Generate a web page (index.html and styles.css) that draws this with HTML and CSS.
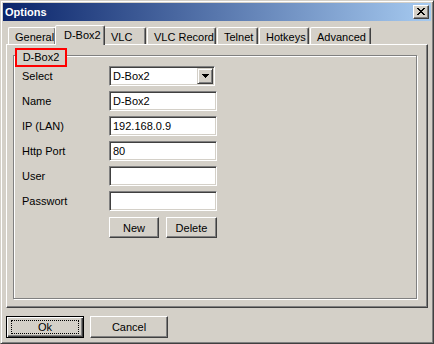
FILE: index.html
```html
<!DOCTYPE html>
<html lang="en">
<head>
    <meta charset="UTF-8">
    <title>Options</title>
    <link rel="stylesheet" href="styles.css">
</head>
<body>

  <div class="window">
    <div class="titlebar">
      <span class="title">Options</span>
      <span class="close-btn">
        <svg width="8" height="7" viewBox="0 0 8 7" shape-rendering="crispEdges">
          <path d="M0 0h2v1h-2z M6 0h2v1h-2z M1 1h2v1h-2z M5 1h2v1h-2z M2 2h4v1h-4z M3 3h2v1h-2z M2 4h4v1h-4z M1 5h2v1h-2z M5 5h2v1h-2z M0 6h2v1h-2z M6 6h2v1h-2z" fill="#000"/>
        </svg>
      </span>
    </div>

    <div class="content">
      <div class="tabs">
        <div class="tab tab-general">General</div>
        <div class="tab tab-dbox active">D-Box2</div>
        <div class="tab tab-vlc">VLC</div>
        <div class="tab tab-record">VLC Record</div>
        <div class="tab tab-telnet">Telnet</div>
        <div class="tab tab-hotkeys">Hotkeys</div>
        <div class="tab tab-advanced">Advanced</div>
      </div>

      <div class="panel">
        <div class="group">
          <span class="legend">D-Box2</span>
          <div class="form">
            <label>Select</label>
            <div class="combo">
              <span class="combo-text">D-Box2</span>
              <span class="combo-btn">
                <svg width="7" height="4" viewBox="0 0 7 4" shape-rendering="crispEdges">
                  <path d="M0 0h7v1h-7z M1 1h5v1h-5z M2 2h3v1h-3z M3 3h1v1h-1z" fill="#000"/>
                </svg>
              </span>
            </div>

            <label>Name</label>
            <input type="text" class="field" value="D-Box2">

            <label>IP (LAN)</label>
            <input type="text" class="field" value="192.168.0.9">

            <label>Http Port</label>
            <input type="text" class="field" value="80">

            <label>User</label>
            <input type="text" class="field" value="">

            <label>Passwort</label>
            <input type="text" class="field" value="">

            <span></span>
            <div class="actions">
              <button class="btn btn-new">New</button>
              <button class="btn btn-delete">Delete</button>
            </div>
          </div>
        </div>
      </div>

      <div class="footer">
        <button class="btn btn-wide btn-default"><span class="focus">Ok</span></button>
        <button class="btn btn-wide">Cancel</button>
      </div>
    </div>
  </div>

</body>
</html>
```

FILE: styles.css
```css
body {
    margin: 0;
    padding: 0;
    background-color: #d4d0c8;
    font-family: "Liberation Sans", Arial, sans-serif;
    font-size: 11px;
    color: #000000;
}

/* classic window frame */
.window {
    box-sizing: border-box;
    width: 434px;
    height: 344px;
    background-color: #d4d0c8;
    border: 1px solid;
    border-color: #d4d0c8 #404040 #404040 #d4d0c8;
    box-shadow: inset 1px 1px 0 #ffffff, inset -1px -1px 0 #808080;
    padding: 2px;
    display: flex;
    flex-direction: column;
}

.titlebar {
    height: 18px;
    display: flex;
    justify-content: space-between;
    align-items: flex-start;
    background: linear-gradient(to right, #0a246a, #a6caf0);
}

.title {
    color: #ffffff;
    font-weight: bold;
    line-height: 18px;
    padding-left: 2px;
}

.close-btn {
    box-sizing: border-box;
    width: 16px;
    height: 14px;
    margin: 2px 2px 0 0;
    padding: 2px 0 0 3px;
    background-color: #d4d0c8;
    border: 1px solid;
    border-color: #ffffff #404040 #404040 #ffffff;
    box-shadow: inset -1px -1px 0 #808080;
    display: flex;
    align-items: flex-start;
}

.content {
    flex: 1;
    display: flex;
    flex-direction: column;
}

/* tab strip */
.tabs {
    height: 19px;
    margin: 4px 0 0 5px;
    display: flex;
    align-items: flex-end;
    gap: 1px;
}

.tab {
    box-sizing: border-box;
    height: 17px;
    padding: 3px 0 0 6px;
    line-height: 13px;
    border: 1px solid;
    border-bottom: none;
    border-color: #ffffff #404040 transparent #ffffff;
    border-radius: 2px 2px 0 0;
    box-shadow: inset -1px 0 0 #808080;
    white-space: nowrap;
}

.tab.active {
    position: relative;
    z-index: 1;
    height: 20px;
    margin: 0 -2px -1px -2px;
    padding-left: 8px;
    background-color: #d4d0c8;
}

.tab-general { width: 48px; }
.tab-dbox { width: 46px; }
.tab-dbox.active { width: 50px; }
.tab-vlc { width: 42px; }
.tab-record { width: 69px; }
.tab-telnet { width: 41px; }
.tab-hotkeys { width: 50px; }
.tab-advanced { width: 61px; }

.panel {
    box-sizing: border-box;
    height: 264px;
    margin: 0 3px;
    padding: 10px 10px 8px 6px;
    border: 1px solid;
    border-color: #ffffff #404040 #404040 #ffffff;
    box-shadow: inset -1px -1px 0 #808080;
    display: flex;
}

/* etched group box */
.group {
    position: relative;
    flex: 1;
    padding: 10px 0 0 8px;
    border: 1px solid #808080;
    box-shadow: inset 1px 1px 0 #ffffff, 1px 1px 0 #ffffff;
}

.legend {
    position: absolute;
    top: -8px;
    left: 1px;
    box-sizing: border-box;
    width: 52px;
    height: 19px;
    line-height: 15px;
    text-align: center;
    background-color: #d4d0c8;
    border: 2px solid #ff0000;
}

.form {
    display: grid;
    grid-template-columns: 87px 108px;
    grid-auto-rows: 20px;
    row-gap: 5px;
    align-items: center;
}

.field,
.combo {
    box-sizing: border-box;
    height: 20px;
    margin: 0;
    padding: 0 0 0 3px;
    font-family: inherit;
    font-size: 11px;
    color: #000000;
    background-color: #ffffff;
    border: 1px solid;
    border-color: #808080 #ffffff #ffffff #808080;
    box-shadow: inset 1px 1px 0 #404040, inset -1px -1px 0 #d4d0c8;
    outline: none;
}

.field {
    width: 108px;
}

.combo {
    width: 106px;
    display: flex;
    align-items: center;
    justify-content: space-between;
    padding-right: 1px;
}

.combo-btn {
    box-sizing: border-box;
    width: 16px;
    height: 16px;
    background-color: #d4d0c8;
    border: 1px solid;
    border-color: #d4d0c8 #404040 #404040 #d4d0c8;
    box-shadow: inset 1px 1px 0 #ffffff, inset -1px -1px 0 #808080;
    display: flex;
    align-items: center;
    justify-content: center;
}

.actions {
    display: flex;
    gap: 7px;
    align-self: start;
    margin-top: 1px;
}

/* raised push buttons */
.btn {
    box-sizing: border-box;
    height: 21px;
    padding: 0;
    font-family: inherit;
    font-size: 11px;
    color: #000000;
    background-color: #d4d0c8;
    border: 1px solid;
    border-color: #ffffff #404040 #404040 #ffffff;
    box-shadow: inset -1px -1px 0 #808080;
    cursor: pointer;
}

.btn-new { width: 50px; }
.btn-delete { width: 51px; }

.footer {
    display: flex;
    gap: 6px;
    margin: 8px 0 0 3px;
}

.btn-wide {
    width: 78px;
    height: 22px;
}

.btn-default {
    display: flex;
    padding: 3px 4px 3px 4px;
    border-color: #000000;
    box-shadow: inset 1px 1px 0 #ffffff, inset -1px -1px 0 #404040, inset -2px -2px 0 #808080;
}

.focus {
    flex: 1;
    border: 1px dotted #000000;
    line-height: 12px;
}
```
